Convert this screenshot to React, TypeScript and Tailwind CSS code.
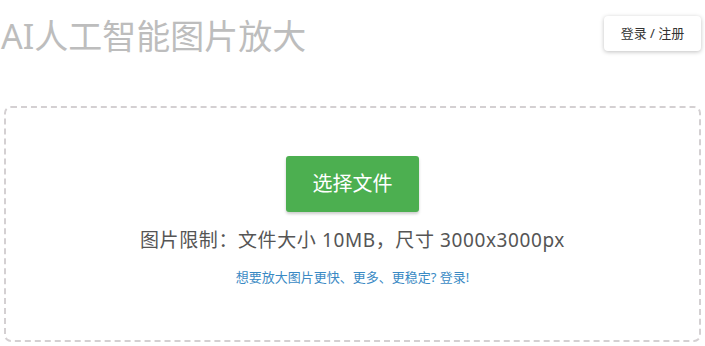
import React from 'react';

const font = { fontFamily: '"Noto Sans", "Noto Sans CJK SC", sans-serif' };

export default function App() {
  return (
    <div className="w-[705px] h-[346px] bg-white overflow-hidden" style={font}>
      {/* Header */}
      <div className="flex items-start justify-between h-[106px]">
        <h1 className="pl-[1px] pt-[13px] text-[34px] leading-[46px] font-normal text-[#bdbdbd]">
          AI人工智能图片放大
        </h1>
        <button className="mt-[16px] mr-[4px] w-[97px] h-[35px] bg-white rounded-[4px] shadow-[0_1px_4px_rgba(0,0,0,0.25)] text-[13px] text-[#333]">
          登录 / 注册
        </button>
      </div>

      {/* Upload area */}
      <div className="ml-[4px] w-[697px] h-[236px] border-2 border-dashed border-[#d4d0d2] rounded-[7px] flex flex-col items-center">
        <button className="mt-[48px] w-[133px] h-[56px] bg-[#4caf50] rounded-[3px] shadow-[0_2px_3px_rgba(0,0,0,0.2)] text-white text-[20px]">
          选择文件
        </button>
        <p className="mt-[15px] text-[19px] leading-[26px] tracking-[0.6px] text-[#555]">
          图片限制：文件大小 10MB，尺寸 3000x3000px
        </p>
        <a href="#" className="mt-[16px] text-[13px] leading-[16px] text-[#3a8ac4]">
          想要放大图片更快、更多、更稳定? 登录!
        </a>
      </div>
    </div>
  );
}
